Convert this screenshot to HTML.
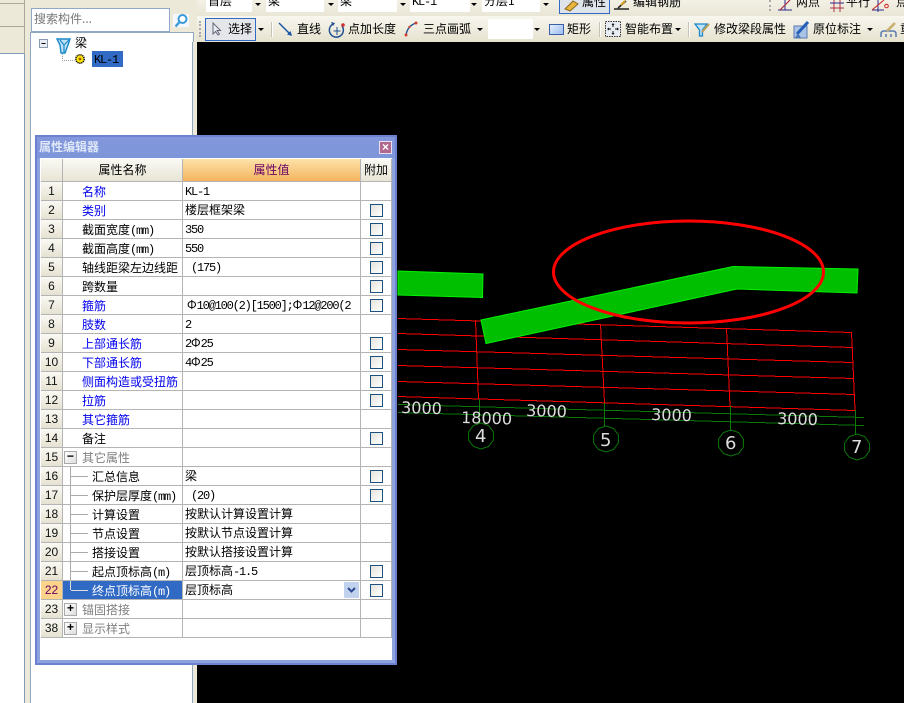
<!DOCTYPE html>
<html><head><meta charset="utf-8">
<style>
html,body{margin:0;padding:0;width:904px;height:703px;overflow:hidden;background:#000}
body{position:relative;font:12px/14px "WenQuanYi Zen Hei","Noto Sans CJK SC",sans-serif;color:#000}
.a{position:absolute}
.t{position:absolute;white-space:nowrap;line-height:14px}
i{font:12px/10px "Liberation Mono",monospace;font-style:normal;letter-spacing:-1.2px}
.w{position:absolute;background:#fff}
.dd{position:absolute;width:0;height:0;border-left:3px solid transparent;border-right:3px solid transparent;border-top:3px solid #000}
.sep{position:absolute;width:1px;background:#c5c2b8;border-right:1px solid #fff}
table{position:absolute;left:41px;top:159px;border-collapse:separate;border-spacing:0;table-layout:fixed;width:351px}
tr{height:19px}
td{box-sizing:border-box;height:19px;max-height:19px;padding:3px 0 0;border-right:1px solid #b4b4b4;border-bottom:1px solid #b4b4b4;white-space:nowrap;overflow:hidden;font-size:12px;line-height:14px;background:#fff;position:relative;vertical-align:top}
td:first-child{background:linear-gradient(#faf9f3,#e6e2d2);text-align:center;color:#111;font-family:"Liberation Sans",sans-serif;font-size:12px;padding-top:2px}
td:nth-child(2){padding-left:19px}
td:nth-child(3){padding-left:2px;padding-top:2px}
td.b{color:#0000ee}
td.g{color:#808080}
td.s{padding-left:29px!important}
tr.h{height:23px}
tr.h td{height:23px;background:linear-gradient(#faf9f3,#e8e5d6);text-align:center;padding:4px 0 0;font-size:12px;font-family:"WenQuanYi Zen Hei","Noto Sans CJK SC",sans-serif}
tr.h td.o{background:linear-gradient(#fde2a8,#f3b45f);color:#660066;padding:4px 0 0}
b.c{position:absolute;left:9px;top:3px;box-sizing:border-box;width:13px;height:13px;border:1px solid #1c5180;background:linear-gradient(135deg,#e4e3dc,#fff)}
s.v{position:absolute;left:7px;top:-1px;width:1px;height:20px;background:#aaa}
s.h{position:absolute;left:8px;top:9px;width:17px;height:1px;background:#aaa}
u.m{position:absolute;left:1px;top:3px;box-sizing:border-box;width:13px;height:13px;border:1px solid #aaa;background:linear-gradient(135deg,#fff,#ddd);text-decoration:none;color:#000;font:bold 12px/10px "Liberation Mono",monospace;text-align:center}
</style></head><body>

<!-- left strip -->
<div class="a" style="left:0;top:0;width:197px;height:703px;background:#ece9d8"></div>
<div class="a" style="left:0;top:3px;width:24px;height:1px;background:#aca899"></div>
<div class="a" style="left:24px;top:0;width:1px;height:703px;background:#aca899"></div>
<div class="a" style="left:0;top:26px;width:24px;height:1px;background:#aca899"></div>
<div class="a" style="left:0;top:53px;width:24px;height:1px;background:#7f9db9"></div>
<div class="w" style="left:0;top:54px;width:24px;height:649px"></div>
<div class="a" style="left:24px;top:54px;width:1px;height:649px;background:#7f9db9"></div>

<!-- search -->
<div class="w" style="left:31px;top:8px;width:137px;height:22px;border:1px solid #8fa8c8"></div>
<div class="t" style="left:34px;top:12px;color:#777;font-size:12px">搜索构件...</div>
<svg class="a" style="left:173px;top:13px" width="16" height="16"><rect width="16" height="13" y="1" fill="#f4f7fb"/><circle cx="9.5" cy="6" r="4" fill="#fff" stroke="#3a9ad8" stroke-width="2"/><path d="M6.5 9L2.5 13.5" stroke="#3a9ad8" stroke-width="2.4"/></svg>

<!-- tree -->
<div class="w" style="left:30px;top:32px;width:162px;height:671px;border:1px solid #8fa8c0;border-bottom:0"></div>
<svg class="a" style="left:38px;top:36px" width="90" height="32">
<rect x="1.5" y="3.5" width="8" height="8" fill="#e8eef4" stroke="#8a9bb0"/><path d="M3.5 7.5h4" stroke="#000"/>
<path d="M19 3h13l-1.5 4.5L27 17h-4L22 9z" fill="#bfe2f7" stroke="#1b88c9" stroke-width="1.4"/><path d="M22 4l4 5v8M31 4l-5 5" stroke="#1b88c9" stroke-width="1.2" fill="none"/>
<path d="M24.500 18v6.500h12" stroke="#999" stroke-dasharray="1 1" fill="none"/>
<circle cx="42" cy="23" r="4.200" fill="#ffe600" stroke="#111" stroke-width="1.500" stroke-dasharray="1.300 .7"/><circle cx="42" cy="23" r="1.400" fill="#a06000"/>
</svg>
<div class="t" style="left:75px;top:36px">梁</div>
<div class="a" style="left:92px;top:51px;width:31px;height:16px;background:#316ac5"></div>
<div class="t" style="left:94px;top:52px"><i>KL-1</i></div>

<!-- right splitter + toolbars -->
<div class="a" style="left:197px;top:0;width:707px;height:42px;background:#ece9d8"></div>
<div class="a" style="left:197px;top:0;width:707px;height:16px;background:linear-gradient(#f3f1e6,#e9e6d6)"></div>
<div class="a" style="left:197px;top:16px;width:707px;height:26px;background:linear-gradient(#f8f7ef,#e6e2cf)"></div>

<!-- row 1 -->
<div class="w" style="left:206px;top:0;width:46px;height:12px"></div><div class="t" style="left:208px;top:-6px">首层</div><div class="dd" style="left:255px;top:3px"></div>
<div class="w" style="left:266px;top:0;width:58px;height:12px"></div><div class="t" style="left:268px;top:-6px">梁</div><div class="dd" style="left:328px;top:3px"></div>
<div class="w" style="left:338px;top:0;width:59px;height:12px"></div><div class="t" style="left:340px;top:-6px">梁</div><div class="dd" style="left:400px;top:3px"></div>
<div class="w" style="left:410px;top:0;width:60px;height:12px"></div><div class="t" style="left:412px;top:-6px"><i>KL-1</i></div><div class="dd" style="left:471px;top:3px"></div>
<div class="w" style="left:482px;top:0;width:58px;height:12px"></div><div class="t" style="left:484px;top:-6px">分层1</div><div class="dd" style="left:543px;top:3px"></div>
<div class="a" style="left:559px;top:-2px;width:49px;height:14px;border:1px solid #316ac5;background:#dfe3ea"></div>
<svg class="a" style="left:564px;top:0" width="16" height="12"><path d="M1 9l8-8 5 3-8 7z" fill="#e7b53c" stroke="#8a6a20"/></svg>
<div class="t" style="left:582px;top:-5px">属性</div>
<svg class="a" style="left:613px;top:0" width="18" height="12"><path d="M1 9h15M5 8l8-7" stroke="#222" stroke-width="1.500"/><path d="M8 5l4-4" stroke="#d8a020" stroke-width="2"/></svg>
<div class="t" style="left:633px;top:-5px">编辑钢筋</div>
<div class="a" style="left:769px;top:0;width:2px;height:11px;border-left:2px dotted #aaa"></div>
<svg class="a" style="left:776px;top:0" width="128" height="12"><path d="M2 10h14M9 0v10M4 10L14 0" stroke="#2a2a8a" fill="none"/><path d="M4 10L14 0" stroke="#c03030"/><path d="M54 3h14M54 8h14M58 0v12M64 0v12" stroke="#b03040" fill="none"/><path d="M54 3h14" stroke="#2a2a8a"/><path d="M96 10h12M102 0v12" stroke="#2a2a8a"/><path d="M96 10L108 0" stroke="#d02020"/><circle cx="110.500" cy="6" r="1.800" fill="none" stroke="#d02020"/></svg>
<div class="t" style="left:796px;top:-5px">两点</div>
<div class="t" style="left:846px;top:-5px">平行</div>
<div class="t" style="left:896px;top:-5px">点</div>

<!-- row 2 -->
<div class="a" style="left:199px;top:21px;width:2px;height:16px;border-left:2px dotted #aaa"></div>
<div class="a" style="left:205px;top:18px;width:49px;height:21px;border:1px solid #316ac5;background:#e4e6ea"></div>
<svg class="a" style="left:211px;top:22px" width="14" height="14"><path d="M2 1v11l2.500-2.500L7 13l1.500-1L6 8.500h3.500z" fill="#e8eef4" stroke="#667"/></svg>
<div class="t" style="left:228px;top:22px">选择</div>
<div class="dd" style="left:258px;top:28px"></div>
<div class="sep" style="left:271px;top:22px;height:15px"></div>
<svg class="a" style="left:278px;top:22px" width="15" height="15"><path d="M1 1L12 12" stroke="#1c55a8" stroke-width="1.500"/><path d="M14 14l-5-1.500 3.500-3.500z" fill="#1c55a8"/></svg>
<div class="t" style="left:297px;top:22px">直线</div>
<svg class="a" style="left:328px;top:21px" width="18" height="18"><path d="M5 3A7 7 0 1 0 14 5" fill="none" stroke="#1f4f90" stroke-width="1.500"/><path d="M9 6v8M5.500 10h7" stroke="#1f4f90"/><path d="M3 1l4 1-2 3z" fill="#1f4f90"/><circle cx="15" cy="4" r="1.800" fill="#d03030"/></svg>
<div class="t" style="left:348px;top:22px">点加长度</div>
<svg class="a" style="left:404px;top:21px" width="15" height="16"><path d="M2 14C3 8 6 4 12 2" fill="none" stroke="#1f4f90" stroke-width="1.400"/><circle cx="2" cy="14" r="1.500" fill="#d04030"/><circle cx="5.500" cy="6" r="1.200" fill="#d04030"/><circle cx="12" cy="2" r="1.500" fill="#d04030"/></svg>
<div class="t" style="left:423px;top:22px">三点画弧</div>
<div class="dd" style="left:477px;top:28px"></div>
<div class="w" style="left:488px;top:19px;width:45px;height:20px"></div>
<div class="dd" style="left:534px;top:28px"></div>
<div class="a" style="left:549px;top:24px;width:13px;height:9px;border:1px solid #3a5ea8;background:linear-gradient(135deg,#e4eefc,#9dbdf0)"></div>
<div class="t" style="left:567px;top:22px">矩形</div>
<div class="sep" style="left:599px;top:22px;height:15px"></div>
<svg class="a" style="left:605px;top:21px" width="16" height="16"><rect x=".5" y=".5" width="15" height="15" fill="#e8edf4" stroke="#333" stroke-dasharray="1.500 1"/><path d="M8 3v3M8 10v3M3 8h3M10 8h3" stroke="#111"/><path d="M8 2l-1.500 2h3zM8 14l-1.500-2h3zM2 8l2-1.500v3zM14 8l-2-1.500v3z" fill="#111"/></svg>
<div class="t" style="left:625px;top:22px">智能布置</div>
<div class="dd" style="left:675px;top:28px"></div>
<div class="sep" style="left:688px;top:22px;height:15px"></div>
<svg class="a" style="left:694px;top:22px" width="17" height="16"><path d="M1 2h12l-4.500 6v6h-3V8z" fill="#bfe2f7" stroke="#1b88c9" stroke-width="1.300"/><path d="M8 10L15 2" stroke="#b8a060" stroke-width="2.200"/></svg>
<div class="t" style="left:714px;top:22px">修改梁段属性</div>
<svg class="a" style="left:793px;top:21px" width="17" height="18"><rect x="1" y="5" width="13" height="12" fill="#a9c4e6" stroke="#5a7ab0"/><path d="M4 13L15 1" stroke="#2560b8" stroke-width="3"/><path d="M2 17l3-5 3 5" fill="#4a78b8"/></svg>
<div class="t" style="left:813px;top:22px">原位标注</div>
<div class="dd" style="left:867px;top:28px"></div>
<svg class="a" style="left:880px;top:21px" width="17" height="18"><path d="M1 16v-3q0-3 3-3h9q3 0 3 3v3" fill="none" stroke="#5a7ab0" stroke-width="1.500"/><path d="M6 16v-3M11 16v-3" stroke="#5a7ab0" stroke-width="1.500"/><path d="M7 10L15 2" stroke="#c8b070" stroke-width="2.600"/></svg>
<div class="t" style="left:900px;top:22px">重</div>

<!-- canvas -->
<svg class="a" style="left:197px;top:42px" width="707" height="661" viewBox="197 42 707 661">
<rect x="197" y="42" width="707" height="661" fill="#000"/>
<g fill="none" stroke="#f00" stroke-width="1" shape-rendering="crispEdges">
<path d="M398 318.500L852 332.500M398 333.500L853 347.500M398 349.500L853 362.500M398 365.500L854 378.500M398 381.500L855 394.500M398 396.500L855 410.500"/>
<path d="M475.500 320L478.500 399M600.500 324L604.500 403M726.500 328L730 406M851.500 332L855 410"/>
</g>
<g fill="none" stroke="#0a7a0a" stroke-width="1">
<path d="M398 404.500L864 417.500M398 412.500L864 425.500" shape-rendering="crispEdges"/>
<path d="M479.500 399V423M604.500 403V427M730.500 406V431M855.500 410V434"/>
<polygon transform="translate(481 436)" points="0,-13 7.600,-10.500 12.400,-4 12.400,4 7.600,10.500 0,13 -7.600,10.500 -12.400,4 -12.400,-4 -7.600,-10.500"/>
<polygon transform="translate(606 439)" points="0,-13 7.600,-10.500 12.400,-4 12.400,4 7.600,10.500 0,13 -7.600,10.500 -12.400,4 -12.400,-4 -7.600,-10.500"/>
<polygon transform="translate(731 443)" points="0,-13 7.600,-10.500 12.400,-4 12.400,4 7.600,10.500 0,13 -7.600,10.500 -12.400,4 -12.400,-4 -7.600,-10.500"/>
<polygon transform="translate(857 447)" points="0,-13 7.600,-10.500 12.400,-4 12.400,4 7.600,10.500 0,13 -7.600,10.500 -12.400,4 -12.400,-4 -7.600,-10.500"/>
</g>
<g font-family="DejaVu Sans" font-size="16" fill="#dcdcdc">
<text x="401" y="413" transform="rotate(1.700 401 413)">3000</text>
<text x="461" y="423" font-size="16" transform="rotate(1.700 461 423)">18000</text>
<text x="526" y="416" transform="rotate(1.700 526 416)">3000</text>
<text x="651" y="420" transform="rotate(1.700 651 420)">3000</text>
<text x="777" y="424" transform="rotate(1.700 777 424)">3000</text>
<text x="475" y="442" font-size="18">4</text>
<text x="600" y="446" font-size="18">5</text>
<text x="725" y="449" font-size="18">6</text>
<text x="851" y="453" font-size="18">7</text>
</g>
<polygon points="398,271 483,274 482.500,297.500 398,295" fill="#00bf00" stroke="#00f000"/>
<polygon points="481,320 733,266.500 858,269 857,293 737,289 486,343.500" fill="#00bf00" stroke="#00f000"/>
<ellipse cx="688.500" cy="272" rx="135" ry="51" fill="none" stroke="#f00" stroke-width="3"/>
</svg>

<!-- splitter -->
<div class="a" style="left:192px;top:42px;width:1px;height:661px;background:#8fa8c0"></div>
<div class="a" style="left:193px;top:42px;width:4px;height:661px;background:#ece9d8"></div>

<!-- dialog -->
<div class="a" style="left:35px;top:135px;width:362px;height:530px;box-sizing:border-box;border:2px solid #6c82d0;background:#8ea3dd"></div>
<div class="a" style="left:37px;top:137px;width:358px;height:21px;background:linear-gradient(#8397dc,#7d95d9)"></div>
<div class="t" style="left:39px;top:140px;color:#dfe8f8;font-weight:bold;letter-spacing:0">属性编辑器</div>
<div class="a" style="left:379px;top:141px;width:11px;height:11px;border:1px solid #e8e0ee;background:#b0688e;color:#fff;font:bold 12px/11px 'Liberation Sans',sans-serif;text-align:center">×</div>
<div class="w" style="left:40px;top:158px;width:352px;height:502px"></div>
<div class="a" style="left:41px;top:159px;width:350px;height:1px;background:#e8e8e8"></div>

<table>
<colgroup><col style="width:22px"><col style="width:120px"><col style="width:178px"><col style="width:31px"></colgroup>
<tr class="h"><td></td><td style="padding-left:0">属性名称</td><td class="o" style="padding-left:0">属性值</td><td>附加</td></tr>
<tr><td>1</td><td class="b">名称</td><td><i>KL-1</i></td><td></td></tr>
<tr><td>2</td><td class="b">类别</td><td>楼层框架梁</td><td><b class="c"></b></td></tr>
<tr><td>3</td><td>截面宽度<i>(mm)</i></td><td><i>350</i></td><td><b class="c"></b></td></tr>
<tr><td>4</td><td>截面高度<i>(mm)</i></td><td><i>550</i></td><td><b class="c"></b></td></tr>
<tr><td>5</td><td>轴线距梁左边线距</td><td><i>&nbsp;(175)</i></td><td><b class="c"></b></td></tr>
<tr><td>6</td><td>跨数量</td><td></td><td><b class="c"></b></td></tr>
<tr><td>7</td><td class="b">箍筋</td><td><span style="padding-left:2px"></span>Φ<i>10@100(2)[1500];</i>Φ<i>12@200(2</i></td><td><b class="c"></b></td></tr>
<tr><td>8</td><td class="b">肢数</td><td><i>2</i></td><td></td></tr>
<tr><td>9</td><td class="b">上部通长筋</td><td><i>2</i>Φ<i>25</i></td><td><b class="c"></b></td></tr>
<tr><td>10</td><td class="b">下部通长筋</td><td><i>4</i>Φ<i>25</i></td><td><b class="c"></b></td></tr>
<tr><td>11</td><td class="b">侧面构造或受扭筋</td><td></td><td><b class="c"></b></td></tr>
<tr><td>12</td><td class="b">拉筋</td><td></td><td><b class="c"></b></td></tr>
<tr><td>13</td><td class="b">其它箍筋</td><td></td><td></td></tr>
<tr><td>14</td><td>备注</td><td></td><td><b class="c"></b></td></tr>
<tr><td>15</td><td class="g"><u class="m">−</u>其它属性</td><td></td><td></td></tr>
<tr><td>16</td><td class="s"><s class="v"></s><s class="h"></s>汇总信息</td><td>梁</td><td><b class="c"></b></td></tr>
<tr><td>17</td><td class="s"><s class="v"></s><s class="h"></s>保护层厚度<i>(mm)</i></td><td><i>&nbsp;(20)</i></td><td><b class="c"></b></td></tr>
<tr><td>18</td><td class="s"><s class="v"></s><s class="h"></s>计算设置</td><td>按默认计算设置计算</td><td></td></tr>
<tr><td>19</td><td class="s"><s class="v"></s><s class="h"></s>节点设置</td><td>按默认节点设置计算</td><td></td></tr>
<tr><td>20</td><td class="s"><s class="v"></s><s class="h"></s>搭接设置</td><td>按默认搭接设置计算</td><td></td></tr>
<tr><td>21</td><td class="s"><s class="v"></s><s class="h"></s>起点顶标高<i>(m)</i></td><td>层顶标高<i>-1.5</i></td><td><b class="c"></b></td></tr>
<tr><td style="background:#fbd38b;color:#660066">22</td><td class="s" style="background:#316ac5;color:#fff"><s class="v" style="height:10px;background:#ddd"></s><s class="h" style="background:#ddd"></s>终点顶标高<i>(m)</i></td><td>层顶标高<span class="a" style="left:161px;top:1px;width:15px;height:16px;background:#c1d2ee;border-radius:1px"><svg width="15" height="16" style="display:block"><path d="M4 6l3.500 3.500L11 6" fill="none" stroke="#2a4a90" stroke-width="2"/></svg></span></td><td><b class="c"></b></td></tr>
<tr><td>23</td><td class="g"><u class="m">+</u>锚固搭接</td><td></td><td></td></tr>
<tr><td>38</td><td class="g"><u class="m">+</u>显示样式</td><td></td><td></td></tr>
</table>
</body></html>
